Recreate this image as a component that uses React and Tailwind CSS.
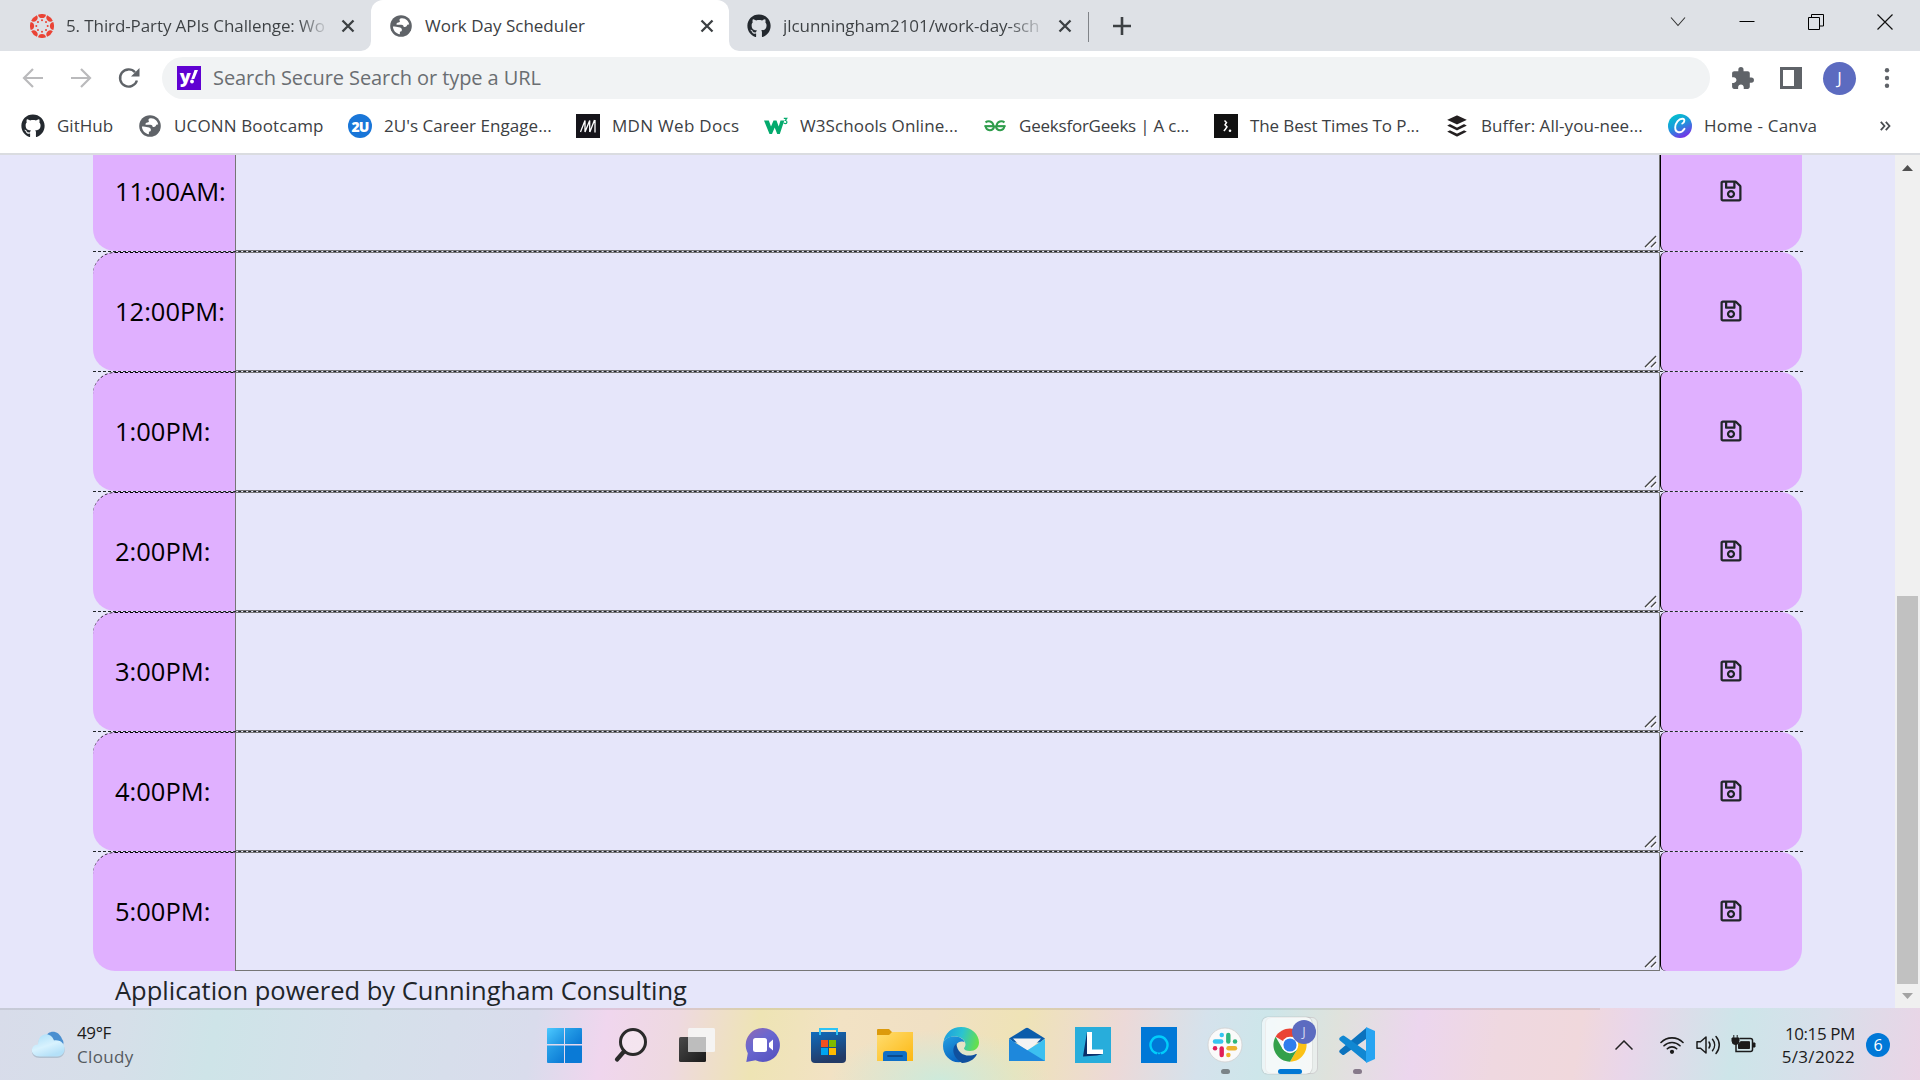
import React from "react";
import { FaRegSave, FaGithub, FaBuffer } from "react-icons/fa";
import { MdExtension } from "react-icons/md";

const HOURS = ["11:00AM:", "12:00PM:", "1:00PM:", "2:00PM:", "3:00PM:", "4:00PM:", "5:00PM:"];

function Globe() {
  return (
    <svg width="24" height="24" viewBox="0 0 24 24">
      <circle cx="12" cy="12" r="10.8" fill="#5f6368" />
      <path
        d="M12.6 4.2c-2 .2-2.600 1.500-1.900 2.500.6.9-.2 1.700-1.300 1.800-1.500.2-2.200 1-1.800 2.300h4.700c1.800 0 2.400 1 2.400 2.300 1.400 0 2.900-.4 3.300-1.700.2-.9 1-1 2.200-.9C19.900 7.300 16.800 3.900 12.600 4.200zM3.900 12.500c.2 4 3.100 7.200 7 7.700v-2.400c1.500-.2 2-.8 2-2 0-1.700-1.400-2.300-3-2.500-1.900-.2-3.600-.8-6-.8z"
        fill="#fff"
      />
    </svg>
  );
}

function CanvasLogo() {
  const spokes = [0, 45, 90, 135, 180, 225, 270, 315];
  return (
    <svg width="24" height="24" viewBox="0 0 24 24" fill="#ea4335">
      {spokes.map((a) => (
        <g key={a} transform={`rotate(${a} 12 12)`}>
          <path d="M8 .7A12 12 0 0 1 16 .7A4.050 4.050 0 0 1 8 .7z" />
          <circle cx="12" cy="6.300" r="1" />
        </g>
      ))}
    </svg>
  );
}

function TwoU() {
  return (
    <span className="flex size-6 items-center justify-center rounded-full bg-[#1976d8] text-[14px] font-extrabold tracking-[-1px] text-white">
      2U
    </span>
  );
}

function Mdn() {
  return (
    <svg width="24" height="24" viewBox="0 0 24 24">
      <rect width="24" height="24" fill="#15141a" />
      <path d="M4.500 18 9 6.500V18L13.700 6.500V18M18.500 6l-4.600 12M19 6v12.500" fill="none" stroke="#fff" strokeWidth="1.300" />
    </svg>
  );
}

function W3() {
  return (
    <svg width="24" height="24" viewBox="0 0 24 24">
      <path d="M0 6.500h4.800l2.200 6L9.500 6.500h3l2.200 6L16.500 6.500h3.800L15.800 20h-2.600L10.700 13.500 8 20H5.500z" fill="#04aa6d" />
      <path d="M19.800 4.300h3l-1.500 2.200c2.400.2 2 3.200-.1 3.100-.8 0-1.300-.4-1.500-1" fill="none" stroke="#04aa6d" strokeWidth="1.200" />
    </svg>
  );
}

function Gfg() {
  return (
    <svg width="24" height="24" viewBox="0 0 24 24" fill="none" stroke="#2f9d4c" strokeWidth="2">
      <path d="M2.500 8.300c2.500-1.700 7.500-1.600 8 3.900H2.600c.4 5 7.600 5.500 8.600 0" />
      <path d="M21.500 8.300c-2.500-1.700-7.500-1.600-8 3.900h7.900c-.4 5-7.600 5.500-8.600 0" />
      <path d="M1.500 12.200h21" strokeWidth="1.600" />
    </svg>
  );
}

function BestTimes() {
  return (
    <svg width="24" height="24" viewBox="0 0 24 24">
      <rect width="24" height="24" fill="#111" />
      <path d="M10.500 6.500l2 2-1.500 2.300 2 2-1.500 2.200-1.600 2" fill="none" stroke="#fff" strokeWidth="1.500" />
      <circle cx="16" cy="16.700" r="1.300" fill="#fff" />
    </svg>
  );
}

function CanvaLogo() {
  return (
    <svg width="24" height="24" viewBox="0 0 24 24">
      <defs>
        <linearGradient id="canva" x1="0.2" y1="0" x2="0.7" y2="1">
          <stop offset="0" stopColor="#00c4cc" />
          <stop offset="0.450" stopColor="#1a9bdc" />
          <stop offset="1" stopColor="#7d2ae8" />
        </linearGradient>
      </defs>
      <circle cx="12" cy="12" r="12" fill="url(#canva)" />
      <path d="M14.300 9.500c2.300-1 3-4.600.3-4.800C10.700 4.400 7.300 9 7.200 13.300c-.1 6 6.100 6.700 9.300 1.400" fill="none" stroke="#fff" strokeWidth="1.900" strokeLinecap="round" />
    </svg>
  );
}

function Close() {
  return (
    <svg width="14" height="14" viewBox="0 0 14 14" stroke="#3c4043" strokeWidth="2.300">
      <path d="M1.500 1.500l11 11M12.500 1.500l-11 11" />
    </svg>
  );
}

const BOOKMARKS = [
  { label: "GitHub", icon: <FaGithub size={24} color="#24292f" />, cls: "w-[117px]" },
  { label: "UCONN Bootcamp", icon: <Globe />, cls: "w-[210px] tracking-[0.15px]" },
  { label: "2U's Career Engage...", icon: <TwoU />, cls: "w-[228px] tracking-[0.05px]" },
  { label: "MDN Web Docs", icon: <Mdn />, cls: "w-[188px] tracking-[0.3px]" },
  { label: "W3Schools Online...", icon: <W3 />, cls: "w-[219px] tracking-[0.1px]" },
  { label: "GeeksforGeeks | A c...", icon: <Gfg />, cls: "w-[231px] tracking-[-0.22px]" },
  { label: "The Best Times To P...", icon: <BestTimes />, cls: "w-[231px] tracking-[-0.12px]" },
  { label: "Buffer: All-you-nee...", icon: <FaBuffer size={24} color="#231f20" />, cls: "w-[223px] tracking-[0.05px]" },
  { label: "Home - Canva", icon: <CanvaLogo />, cls: "w-[180px] tracking-[0.2px]" },
];

function TabStrip() {
  return (
    <div className="flex h-[51px] shrink-0 bg-white text-[17px] text-[#3c4043]">
      <div className="flex w-[371px] items-center rounded-br-[10px] bg-[#dee1e6] pl-[30px]">
        <CanvasLogo />
        <span className="ml-3 w-[264px] whitespace-nowrap bg-gradient-to-r from-[#3c4043] from-88% to-transparent bg-clip-text text-transparent tracking-[-0.1px]">
          5. Third-Party APIs Challenge: Wo
        </span>
        <span className="ml-[11px]"><Close /></span>
      </div>
      <div className="w-[358px] bg-[#dee1e6]">
        <div className="flex h-full items-center rounded-t-[12px] bg-white pl-[18px]">
          <Globe />
          <span className="ml-3 w-[275px] whitespace-nowrap">Work Day Scheduler</span>
          <Close />
        </div>
      </div>
      <div className="flex flex-1 rounded-bl-[10px] bg-[#dee1e6]">
        <div className="flex w-[359px] items-center pl-[18px]">
          <FaGithub size={24} color="#24292f" />
          <span className="ml-3 w-[264px] whitespace-nowrap bg-gradient-to-r from-[#3c4043] from-85% to-transparent bg-clip-text text-transparent tracking-[-0.05px]">
            jlcunningham2101/work-day-sch
          </span>
          <span className="ml-[11px]"><Close /></span>
        </div>
        <div className="mt-3 h-[30px] w-px bg-[#808388]" />
        <div className="flex w-[66px] items-center justify-center">
          <svg width="18" height="18" viewBox="0 0 18 18" stroke="#3c4043" strokeWidth="2.600"><path d="M9 0v18M0 9h18" /></svg>
        </div>
        <div className="ml-auto flex h-[43px] items-center gap-[53px] pr-[27px]">
          <svg width="16" height="16" viewBox="0 0 16 16" fill="none" stroke="#333" strokeWidth="1.100"><path d="M1 3.500 8 11.500 15 3.500" /></svg>
          <svg width="16" height="16" viewBox="0 0 16 16" stroke="#000"><path d="M.5 7.500h15" /></svg>
          <svg width="16" height="16" viewBox="0 0 16 16" fill="none" stroke="#000"><path d="M.5 3.500h11v12H.5zM3.500 3.500v-3h12v11.500h-4" /></svg>
          <svg width="16" height="16" viewBox="0 0 16 16" stroke="#111" strokeWidth="1.200"><path d="M.5.5l15 15M15.500.5l-15 15" /></svg>
        </div>
      </div>
    </div>
  );
}

function Toolbar() {
  return (
    <div className="flex h-[54px] shrink-0 items-center bg-white pl-[22px]">
      <svg width="22" height="22" viewBox="0 0 22 22" fill="none" stroke="#bababc" strokeWidth="2.200"><path d="M21 11H2.500M11 2 2 11l9 9" /></svg>
      <svg className="ml-[26px]" width="22" height="22" viewBox="0 0 22 22" fill="none" stroke="#bababc" strokeWidth="2.200"><path d="M1 11h18.500M11 2l9 9-9 9" /></svg>
      <svg className="ml-[26px]" width="22" height="22" viewBox="0 0 22 22" fill="none" stroke="#5f6368" strokeWidth="2.400">
        <path d="M18.900 13.500A8.600 8.600 0 1 1 17 5.200" />
        <path d="M21.500 1v8.500H13z" fill="#5f6368" stroke="none" />
      </svg>
      <div className="ml-[22px] flex h-[42px] w-[1548px] items-center rounded-full bg-[#f1f3f4] pl-[15px]">
        <span className="flex size-6 items-center justify-center bg-[#6001d2] text-[18px] leading-none font-extrabold text-white">
          <span className="-mt-1 tracking-[-0.5px]">y</span>
          <svg width="8" height="15" viewBox="0 0 8 15" fill="#fff" className="-mt-px"><path d="M4.500 0H8L4.300 9H1.300z" /><circle cx="2" cy="11.500" r="1.900" /></svg>
        </span>
        <span className="ml-3 text-[20px] tracking-[-0.08px] text-[#6a6e72]">Search Secure Search or type a URL</span>
      </div>
      <MdExtension className="ml-[20px]" size={25} color="#5f6368" />
      <svg className="ml-[25px]" width="22" height="22" viewBox="0 0 22 22"><path d="M0 0h22v22H0zM3 3v16h11V3z" fill="#5f6368" fillRule="evenodd" /></svg>
      <span className="ml-[21px] flex size-[33px] items-center justify-center rounded-full bg-[#5c6bc0] text-[17px] text-white">J</span>
      <svg className="ml-[28px]" width="6" height="20" viewBox="0 0 6 20" fill="#5f6368"><circle cx="3" cy="2.300" r="2.200" /><circle cx="3" cy="10" r="2.200" /><circle cx="3" cy="17.700" r="2.200" /></svg>
    </div>
  );
}

function BookmarkBar() {
  return (
    <div className="flex h-[50px] shrink-0 items-center border-b-2 border-[#dadce0] bg-white pb-[6px] pl-[21px] text-[17px] text-[#3c4043]">
      {BOOKMARKS.map((b) => (
        <div key={b.label} className={`flex shrink-0 items-center gap-3 whitespace-nowrap ${b.cls}`}>
          <span className="flex size-6 shrink-0">{b.icon}</span>
          <span className="-mt-px">{b.label}</span>
        </div>
      ))}
      <svg className="ml-[32px]" width="11" height="10" viewBox="0 0 11 10" fill="none" stroke="#4a4d51" strokeWidth="1.800"><path d="M.8.8 4.500 5 .8 9.200M5.800.8 9.500 5 5.800 9.200" /></svg>
    </div>
  );
}

function HourRow({ label }) {
  return (
    <div className="flex h-[120px] w-[1710px] border-t border-dashed border-[#212529]">
      <div className="flex w-[142px] shrink-0 items-center rounded-l-[22px] border-t border-dashed border-black bg-[#e0b0ff] pb-[2px] pl-[22px] text-[25.5px] whitespace-nowrap text-black">
        {label}
      </div>
      <div className="flex w-[1425px] items-end justify-end border border-[#767676] pr-[2px] pb-[2px]">
        <svg width="13" height="13" viewBox="0 0 13 13" fill="none">
          <path d="M2 12.700 12.700 2M8 12.700l4.700-4.700" stroke="#fff" strokeWidth="1.300" />
          <path d="M1 12 12 1M7 12l5-5" stroke="#444" strokeWidth="1.400" />
        </svg>
      </div>
      <div className="flex w-[142px] items-center justify-center rounded-l-[6px] rounded-r-[22px] border-l border-black bg-[#e0b0ff] pr-px pb-[2px]">
        <FaRegSave size={24} color="#212529" />
      </div>
    </div>
  );
}

function Page() {
  return (
    <div className="flex h-[853px] shrink-0 bg-[#e6e6fa]">
      <div className="flex-1 overflow-hidden pl-[93px]">
        <div className="-mt-6">
          {HOURS.map((h) => (
            <HourRow key={h} label={h} />
          ))}
        </div>
        <div className="pl-[22px] text-[25.5px] leading-[39px] text-[#212529]">Application powered by Cunningham Consulting</div>
      </div>
      <div className="flex w-[25px] flex-col items-center bg-[#f0f0f0]">
        <svg className="mt-[10px]" width="11" height="6" viewBox="0 0 11 6" fill="#505050"><path d="M5.500 0 11 6H0z" /></svg>
        <div className="mt-[425px] h-[388px] w-[21px] bg-[#c1c1c1]" />
        <svg className="mt-[9px]" width="11" height="6" viewBox="0 0 11 6" fill="#a3a3a3"><path d="M0 0h11L5.500 6z" /></svg>
      </div>
    </div>
  );
}

function AppIcon({ children }) {
  return (
    <svg width="36" height="36" viewBox="0 0 36 36">
      {children}
    </svg>
  );
}

const APPS = [
  {
    name: "start",
    art: (
      <>
        <defs><linearGradient id="win" x1="0" y1="0" x2="1" y2="1" gradientUnits="objectBoundingBox"><stop offset="0" stopColor="#4cc9ff" /><stop offset="1" stopColor="#1a8fe0" /></linearGradient>
          <linearGradient id="win2" x1="0" y1="0" x2="1" y2="1"><stop offset="0" stopColor="#2aa4ea" /><stop offset="1" stopColor="#0a78d4" /></linearGradient></defs>
        <path d="M1 1h16v16H0V2a1 1 0 0 1 1-1z" fill="url(#win)" />
        <path d="M18 1h16a1 1 0 0 1 1 1v15H18z" fill="url(#win2)" />
        <path d="M0 18.500h17V36H1a1 1 0 0 1-1-1z" fill="url(#win2)" />
        <path d="M18 18.500h17V35a1 1 0 0 1-1 1H18z" fill="#0a7ad6" />
      </>
    ),
  },
  {
    name: "search",
    art: (
      <g fill="none" stroke="#2a2a2a" strokeLinecap="round">
        <circle cx="20" cy="15" r="12.500" strokeWidth="3" fill="#ffffff55" />
        <path d="M11 24.500 4 32.500" strokeWidth="4.200" />
      </g>
    ),
  },
  {
    name: "taskview",
    art: (
      <>
        <defs><linearGradient id="tv" x1="0" y1="0" x2="1" y2="1"><stop offset="0" stopColor="#4a4a4a" /><stop offset="1" stopColor="#1a1a1a" /></linearGradient></defs>
        <rect x="0" y="10" width="27" height="25" rx="1.500" fill="url(#tv)" />
        <rect x="9" y="1" width="27" height="24" rx="1.500" fill="#f4f4f4" fillOpacity="0.95" />
        <path d="M9 10h18v15H10.500A1.500 1.500 0 0 1 9 23.500z" fill="#bdbdbd" />
      </>
    ),
  },
  {
    name: "chat",
    art: (
      <>
        <defs><linearGradient id="chat" x1="0.1" y1="0" x2="0.8" y2="1"><stop offset="0" stopColor="#8e68b4" /><stop offset="0.400" stopColor="#6a68d0" /><stop offset="1" stopColor="#5552c0" /></linearGradient></defs>
        <path d="M18 1a17 17 0 1 1-7.500 32.300L1.300 35l1.500-8.800A17 17 0 0 1 18 1z" fill="url(#chat)" />
        <rect x="8" y="11" width="14" height="14" rx="2.500" fill="#fff" />
        <path d="M24 16l4-3.500v11L24 20z" fill="#fff" />
      </>
    ),
  },
  {
    name: "store",
    art: (
      <>
        <defs><linearGradient id="store" x1="0" y1="0" x2="0.3" y2="1"><stop offset="0" stopColor="#0f6cbd" /><stop offset="1" stopColor="#233a66" /></linearGradient></defs>
        <path d="M0 5h35v27a4 4 0 0 1-4 4H4a4 4 0 0 1-4-4z" fill="url(#store)" />
        <path d="M9 8V2h17v6" fill="none" stroke="#2cc3f5" strokeWidth="2" />
        <path d="M10 13h7v7h-7z" fill="#f25022" />
        <path d="M18 13h7v7h-7z" fill="#7fba00" />
        <path d="M10 21h7v7h-7z" fill="#00a4ef" />
        <path d="M18 21h7v7h-7z" fill="#ffb900" />
      </>
    ),
  },
  {
    name: "explorer",
    art: (
      <>
        <defs><linearGradient id="folder" x1="0" y1="0" x2="1" y2="1"><stop offset="0" stopColor="#ffdd70" /><stop offset="1" stopColor="#fdb813" /></linearGradient></defs>
        <path d="M1 2h11l3 3h20a1 1 0 0 1 1 1v8H0V3a1 1 0 0 1 1-1z" fill="#dc9a0b" />
        <path d="M0 8h12l3-3h21v29H0z" fill="url(#folder)" />
        <path d="M6 34v-7a3 3 0 0 1 3-3h18a3 3 0 0 1 3 3v7z" fill="#0f6fc6" />
        <path d="M11 29h14" stroke="#0a4a8c" strokeWidth="1.800" strokeLinecap="round" />
      </>
    ),
  },
  {
    name: "edge",
    art: (
      <>
        <defs>
          <linearGradient id="eg" x1="0" y1="0.300" x2="1" y2="0.500"><stop offset="0" stopColor="#1c9de0" /><stop offset="0.500" stopColor="#2bc3d0" /><stop offset="1" stopColor="#66e04a" /></linearGradient>
          <linearGradient id="eb" x1="0" y1="0" x2="0.500" y2="1"><stop offset="0" stopColor="#23a0e2" /><stop offset="1" stopColor="#0a64c0" /></linearGradient>
        </defs>
        <path d="M.5 14.500C2 6 9 0 18 0c10.500 0 18 7.500 18 15.500 0 5-4 8.500-9 8.500-4 0-6-1.500-6-2.500s1.500-1.500 1.500-4c0-4-4-8-10-8C7 9.500 2.500 11 .5 14.500z" fill="url(#eg)" />
        <path d="M.5 14.500C3 10.500 7.500 9.500 12 9.500c5 0 9 3 9.800 6-1.800-1.700-7.300-1.500-9 3-2 6 1 12.500 8 16C9 38 0 29 0 19c0-1.600.2-3 .5-4.500z" fill="url(#eb)" />
        <path d="M13.500 16.500C8 21 9.500 30.500 19 35.900c6.500.2 12-3.400 14.700-8.200.3-.7-.2-1-.8-.7-8.400 4-19 .5-19.400-10.500z" fill="#10509e" />
      </>
    ),
  },
  {
    name: "mail",
    art: (
      <>
        <path d="M0 11.500 16.500 1.300a3 3 0 0 1 3 0L36 11.500l-5 4H5z" fill="#0b5cab" />
        <path d="M4 11.500h28L18 26z" fill="#f3f3f3" />
        <path d="M36 12v22H0V12l18 11.500z" fill="#3cc0f0" />
        <path d="M0 12l36 22H0z" fill="#1e88dc" />
      </>
    ),
  },
  {
    name: "L",
    art: (
      <>
        <rect width="36" height="36" fill="#28addb" />
        <path d="M12 5 8 29.500l14-1 6-1.500-12-4z" fill="#0b2f6b" />
        <path d="M12 5h5v17.500h11V27H12z" fill="#fff" />
      </>
    ),
  },
  {
    name: "alexa",
    art: (
      <>
        <rect width="36" height="36" fill="#0078d7" />
        <path d="M16 26.300a8.500 8.500 0 1 1 4 0" fill="none" stroke="#00cdfb" strokeWidth="2.400" />
        <path d="M15.500 25.500h5l-2.500 2z" fill="#00cdfb" />
      </>
    ),
  },
  {
    name: "slack",
    running: true,
    art: (
      <>
        <circle cx="18" cy="18" r="17" fill="#fafafa" stroke="#cfcfcf" strokeWidth="0.8" />
        <g strokeWidth="4.400" strokeLinecap="round">
          <path d="M8 14.500h6.200" stroke="#36c5f0" /><path d="M14.700 8h.1" stroke="#36c5f0" />
          <path d="M21.300 8v6.500" stroke="#2eb67d" /><path d="M28 14.500h.1" stroke="#2eb67d" />
          <path d="M28 21.300h-6.500" stroke="#ecb22e" /><path d="M21.300 28h.1" stroke="#ecb22e" />
          <path d="M14.700 28v-6.500" stroke="#e01e5a" /><path d="M8 21.300h.1" stroke="#e01e5a" />
        </g>
      </>
    ),
  },
];

function ChromeApp() {
  return (
    <div className="relative flex h-full w-[66px] items-center justify-center">
      <div className="absolute top-[7px] left-[8px] h-[57px] w-[53px] rounded-[6px] border border-[#cfcfd0] bg-white/40" />
      <div className="absolute top-[7px] left-[5px] h-[57px] w-[50px] rounded-[6px] bg-white/60 shadow-[0_0_1px_#777]" />
      <svg className="relative" width="34" height="34" viewBox="0 0 48 48">
        <path d="M24 24 3.700 12.300a23.500 23.500 0 0 1 40.600 0z" fill="#ea4335" />
        <path d="M24 24V12.300h20.300A23.500 23.500 0 0 1 24 47.500L34.200 29.900z" fill="#fbc116" />
        <path d="M24 47.500A23.500 23.500 0 0 1 3.700 12.300L13.800 29.900 24 35.700l10.200-5.800z" fill="#34a04a" />
        <circle cx="24" cy="24" r="11.700" fill="#fff" />
        <circle cx="24" cy="24" r="9.300" fill="#2f7ded" />
      </svg>
      <span className="absolute top-[10px] left-[35px] flex size-6 items-center justify-center rounded-full bg-[#5c6bc0] text-[13px] text-[#d5d9f0]">J</span>
      <span className="absolute top-[59px] left-[21px] h-[5px] w-6 rounded-full bg-[#0078d4]" />
    </div>
  );
}

function Taskbar() {
  return (
    <div className="flex h-[72px] shrink-0 flex-col bg-[radial-gradient(ellipse_110px_50px_at_940px_72px,#cdeadb_0%,transparent_100%),linear-gradient(100deg,#d8dcea_0px,#d6dfe9_120px,#cee4e8_215px,#d5e0ea_370px,#d9dcec_530px,#f0d6ee_600px,#eed9e0_670px,#eee4b4_750px,#f2e2c4_830px,#f0e0c4_920px,#efe3b6_1010px,#ecd9d8_1110px,#d5e2ec_1190px,#cde6ea_1250px,#dfe2dc_1320px,#ecd6ee_1400px,#efd8e0_1480px,#f0d8dc_1560px,#e9d6ea_1610px,#cde5e9_1715px,#d8dfea_1800px,#ebd4e6_1910px,#f0d6e2_1940px)]">
      <div className="h-[2px] w-[1600px] shrink-0 bg-black/8" />
      <div className="flex h-[70px] items-center">
        <div className="flex w-[532px] shrink-0 items-center pl-[31px]">
          <svg width="36" height="32" viewBox="0 0 36 32">
            <defs><linearGradient id="cl" x1="0" y1="0" x2="0.500" y2="1"><stop offset="0" stopColor="#a8ddf8" /><stop offset="0.600" stopColor="#d8f2fe" /><stop offset="1" stopColor="#b4e0f8" /></linearGradient></defs>
            <path d="M14 9C17 0 28 1 31 10c2 2 2 5 0 8z" fill="#4a8fd0" />
            <path d="M9 29c-11 0-10-13-2-13C7 4 21 3 24 13c12-2 13 16 2 16z" fill="#8da6b8" opacity=".5" />
            <path d="M9 27.500c-11 0-10-12-2-12C7 3 20 2 23 11.500c13-2 14 16 3 16z" fill="url(#cl)" />
          </svg>
          <div className="ml-[10px] flex flex-col text-[17px] leading-6">
            <span className="tracking-[-0.4px] text-[#1b1b1b]">49°F</span>
            <span className="tracking-[0.35px] text-[#555a60]">Cloudy</span>
          </div>
        </div>
        {APPS.map((a) => (
          <div key={a.name} className="relative flex h-full w-[66px] items-center justify-center">
            <AppIcon>{a.art}</AppIcon>
            {a.running && <span className="absolute top-[59px] h-[5px] w-[9px] rounded-full bg-[#7b8488]" />}
          </div>
        ))}
        <div className="-ml-px flex h-full"><ChromeApp /></div>
        <div className="relative ml-px flex h-full w-[66px] items-center justify-center">
          <AppIcon>
            <path d="M27 1v11L5.500 27.500a2 2 0 0 1-2.500 0L.9 25.800a2 2 0 0 1 0-2.800z" fill="#0b72bd" />
            <path d="M27 35V24L5.500 9A2 2 0 0 0 3 9L.9 10.600a2 2 0 0 0 0 2.800z" fill="#1187d2" />
            <path d="M27 0l9 4v28l-9 4z" fill="#27a4f2" />
          </AppIcon>
          <span className="absolute top-[59px] h-[5px] w-[9px] rounded-full bg-[#86798a]" />
        </div>
        <div className="ml-auto flex items-center pr-[30px]">
          <svg width="18" height="10" viewBox="0 0 18 10" fill="none" stroke="#222" strokeWidth="1.500"><path d="M.5 9.500 9 1l8.500 8.500" /></svg>
          <svg className="ml-[27px]" width="24" height="18" viewBox="0 0 24 18" fill="none" stroke="#1b1b1b" strokeWidth="1.600" strokeLinecap="round">
            <path d="M1 6.500a15.500 15.500 0 0 1 22 0M4 9.800a11.300 11.300 0 0 1 16 0M7.300 12.800a6.700 6.700 0 0 1 9.400 0" />
            <circle cx="12" cy="15.800" r="1.300" fill="#1b1b1b" />
          </svg>
          <svg className="ml-[12px]" width="24" height="20" viewBox="0 0 24 20" fill="none" stroke="#1b1b1b" strokeWidth="1.500" strokeLinecap="round" strokeLinejoin="round">
            <path d="M1 6.800h3.500L10 2v16l-5.500-4.800H1zM13 7c1.300 1.800 1.300 4.200 0 6M16.500 4.300c2.800 3.400 2.800 8 0 11.400M20 1.500c4.300 5 4.300 12 0 17" />
          </svg>
          <svg className="ml-[11px]" width="25" height="20" viewBox="0 0 25 20" fill="none" stroke="#1b1b1b" strokeWidth="1.500">
            <path d="M8.500 3.500h11a2 2 0 0 1 2 2v9a2 2 0 0 1-2 2H5V8" />
            <path d="M9.500 6.700h9v6.800H7.500V9z" fill="#1b1b1b" strokeWidth="1" />
            <path d="M1 3h7v3a3.500 3.500 0 0 1-7 0zM2.800 0v3M6.200 0v3M22 8h2v4h-2z" fill="#1b1b1b" strokeWidth="1" />
          </svg>
          <div className="ml-[25px] flex w-[74px] flex-col items-end text-[17px] leading-[23px] whitespace-nowrap text-[#1b1b1b]">
            <span className="tracking-[-0.4px]">10:15 PM</span>
            <span className="tracking-[0.3px]">5/3/2022</span>
          </div>
          <span className="ml-[11px] flex size-6 items-center justify-center rounded-full bg-[#0078d7] pb-px text-[16px] text-white">6</span>
        </div>
      </div>
    </div>
  );
}

export default function App() {
  return (
    <div className="flex h-[1080px] w-[1920px] flex-col overflow-hidden bg-white font-['Open_Sans',sans-serif]">
      <TabStrip />
      <Toolbar />
      <BookmarkBar />
      <Page />
      <Taskbar />
    </div>
  );
}
